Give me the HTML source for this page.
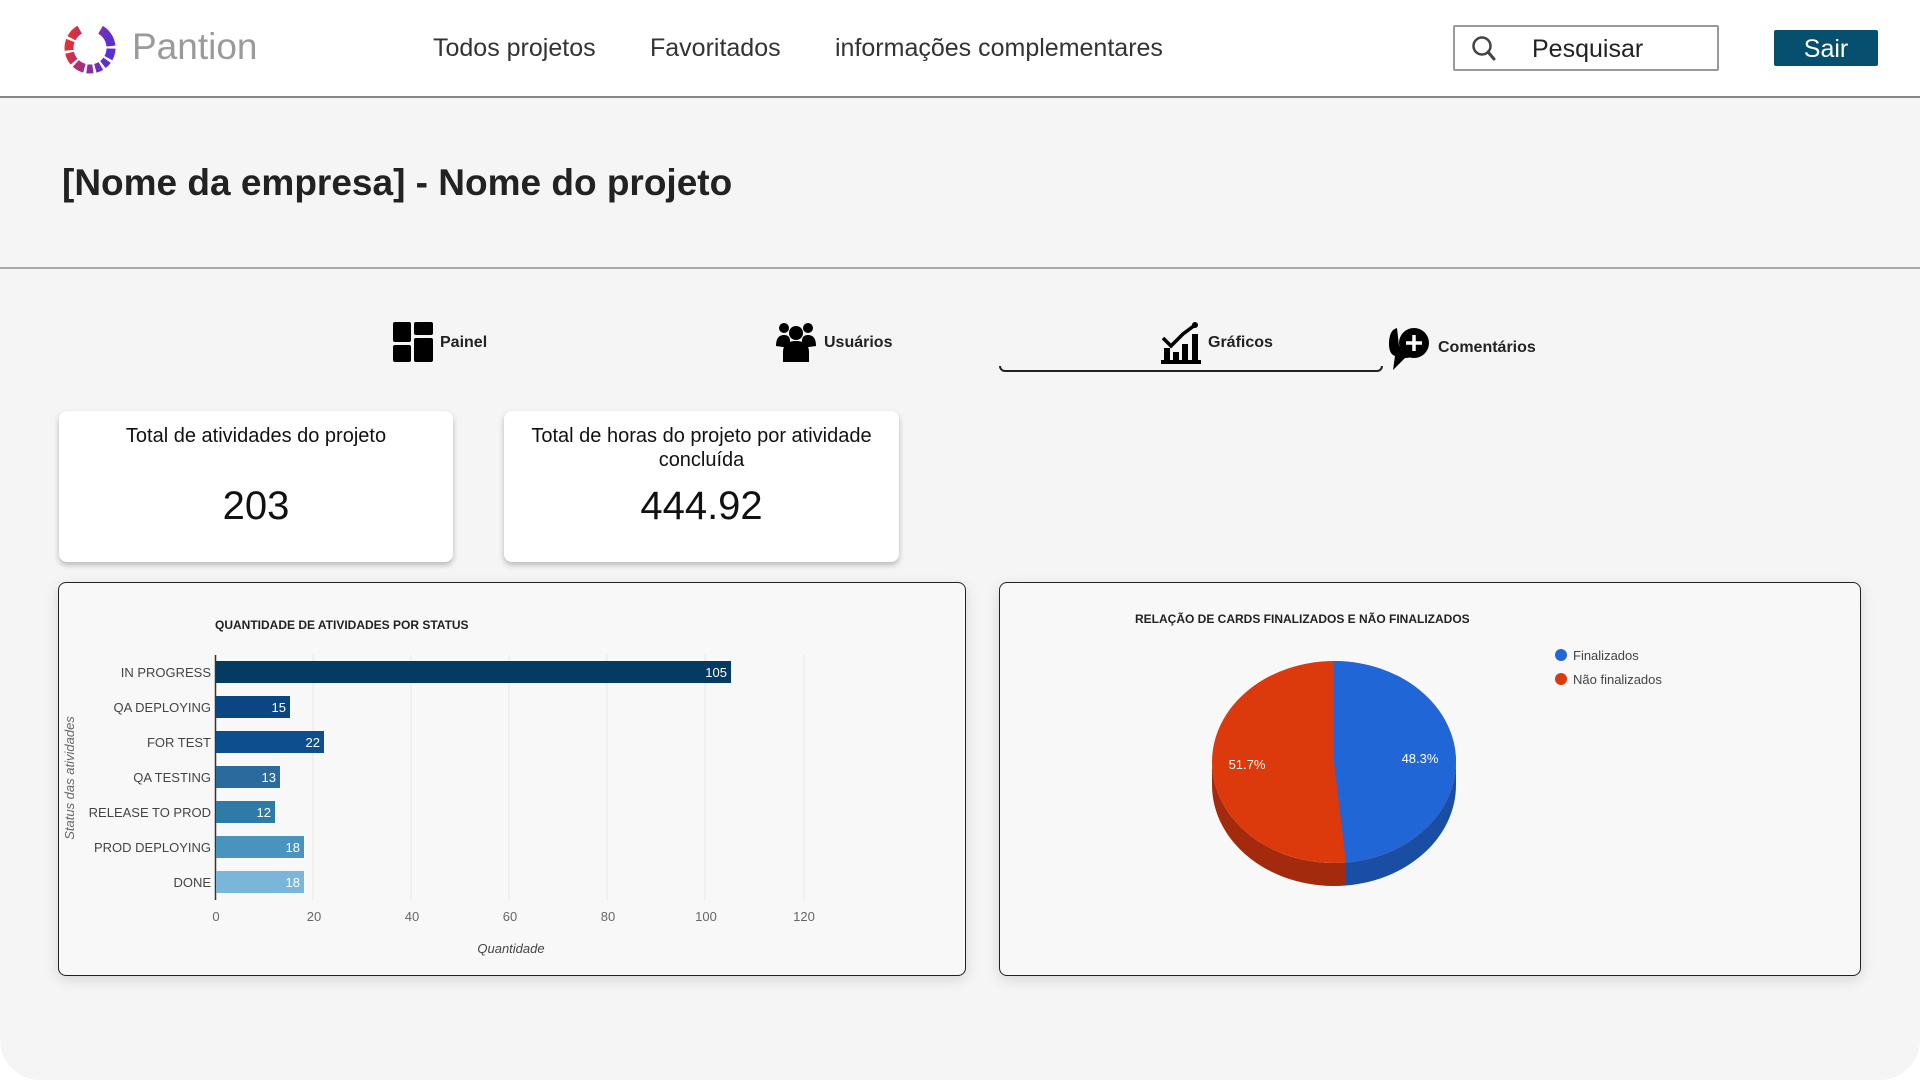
<!DOCTYPE html>
<html><head><meta charset="utf-8"><style>
*{margin:0;padding:0;box-sizing:border-box}
body{width:1920px;height:1080px;background:#fff;font-family:"Liberation Sans",sans-serif;position:relative;overflow:hidden}
.main{position:absolute;left:0;top:96px;width:1920px;height:984px;background:#f5f5f5;border-radius:0 0 40px 40px;border-top:2px solid #888}
.a{position:absolute;white-space:nowrap}
.nav{font-size:25px;color:#333;top:34px}
.card{position:absolute;background:#fff;border-radius:8px;box-shadow:0 3px 6px rgba(0,0,0,.25);text-align:center;color:#111}
.ch{position:absolute;background:#f8f8f8;border:1.5px solid #222;border-radius:8px;box-shadow:0 4px 14px rgba(0,0,0,.12)}
.tab{font-size:16px;font-weight:bold;color:#222}
</style></head><body>
<svg class="a" style="left:62px;top:20px" width="56" height="56" viewBox="0 0 56 56">
<defs><linearGradient id="g" x1="0" y1="0" x2="0.3" y2="1"><stop offset="0" stop-color="#f0302a"/><stop offset="1" stop-color="#5a2fd8"/></linearGradient></defs>
<circle cx="28" cy="28" r="21" fill="none" stroke="url(#g)" stroke-width="9" stroke-dasharray="20 2.5 10 2.5 6 2.5 6 2.5 6 2.5 10 2.5 10 2.5 10 2.5 12 40" transform="rotate(-60 28 28)"/>
</svg>
<div class="a" style="left:132px;top:26px;font-size:37px;color:#9a9a9a">Pantion</div>
<div class="a nav" style="left:433px">Todos projetos</div>
<div class="a nav" style="left:650px">Favoritados</div>
<div class="a nav" style="left:835px">informações complementares</div>
<div class="a" style="left:1453px;top:25px;width:266px;height:46px;border:2px solid #999;border-radius:2px;background:#fff"></div>
<svg class="a" style="left:1470px;top:34px" width="28" height="28" viewBox="0 0 28 28"><circle cx="12" cy="12" r="8.5" fill="none" stroke="#444" stroke-width="2.5"/><path d="M18 18 L24 25" stroke="#444" stroke-width="3" stroke-linecap="round"/></svg>
<div class="a" style="left:1532px;top:35px;font-size:25px;color:#222">Pesquisar</div>
<div class="a" style="left:1774px;top:30px;width:104px;height:36px;background:#064f6e;border-radius:2px;color:#fff;font-size:25px;text-align:center;line-height:38px">Sair</div>
<div class="main"></div>
<div class="a" style="left:62px;top:162px;font-size:37px;font-weight:bold;color:#222">[Nome da empresa] - Nome do projeto</div>
<div class="a" style="left:0;top:267px;width:1920px;height:2px;background:#aaa"></div>

<svg class="a" style="left:393px;top:322px" width="40" height="40" viewBox="0 0 40 40"><rect x="0" y="0" width="18" height="20" rx="2"/><rect x="0" y="23" width="18" height="17" rx="2"/><rect x="21" y="0" width="19" height="13" rx="2"/><rect x="21" y="16" width="19" height="24" rx="2"/></svg>
<div class="a tab" style="left:440px;top:334px">Painel</div>
<svg class="a" style="left:776px;top:322px" width="40" height="40" viewBox="0 0 40 40"><circle cx="8" cy="6" r="5"/><circle cx="32" cy="6" r="5"/><circle cx="20" cy="11" r="7"/><path d="M0 24 Q0 13 8 13 Q14 13 14 19 L14 26 Z"/><path d="M40 24 Q40 13 32 13 Q26 13 26 19 L26 26 Z"/><path d="M7 40 L7 30 Q7 19 20 19 Q33 19 33 30 L33 40 Z"/></svg>
<div class="a tab" style="left:824px;top:334px">Usuários</div>
<svg class="a" style="left:1161px;top:322px" width="40" height="42" viewBox="0 0 40 42"><rect x="0" y="38" width="40" height="4"/><rect x="3" y="26" width="6" height="13"/><rect x="12" y="30" width="6" height="9"/><rect x="21" y="22" width="6" height="17"/><rect x="31" y="12" width="6" height="27"/><path d="M2 16 L10 24 L22 12 L34 3" fill="none" stroke="#000" stroke-width="3.5"/><circle cx="34" cy="3" r="3"/></svg>
<div class="a tab" style="left:1208px;top:334px">Gráficos</div>
<div class="a" style="left:999px;top:366px;width:384px;height:6px;border:2.5px solid #222;border-top:none;border-radius:0 0 6px 6px"></div>
<svg class="a" style="left:1389px;top:326px" width="42" height="44" viewBox="0 0 42 44"><path d="M8 2 Q0 4 0 18 Q0 28 6 30 L4 44 L16 32 Q22 32 22 30 L10 20 Z"/><circle cx="25" cy="17" r="15"/><circle cx="25" cy="17" r="11" fill="#000"/><path d="M25 9 V25 M17 17 H33" stroke="#fff" stroke-width="3.5"/></svg>
<div class="a tab" style="left:1438px;top:339px">Comentários</div>

<div class="card" style="left:59px;top:411px;width:394px;height:151px"><div style="margin-top:14px;font-size:20px">Total de atividades do projeto</div><div style="margin-top:36px;font-size:40px">203</div></div>
<div class="card" style="left:504px;top:411px;width:395px;height:151px"><div style="margin-top:13px;font-size:20px;line-height:24px">Total de horas do projeto por atividade<br>concluída</div><div style="margin-top:12px;font-size:40px">444.92</div></div>

<div class="ch" style="left:58px;top:582px;width:908px;height:394px"></div>
<svg class="a" style="left:58px;top:582px" width="908" height="394" viewBox="58 582 908 394" font-family="Liberation Sans, sans-serif">
<text x="215" y="629" font-size="12" font-weight="bold" fill="#222">QUANTIDADE DE ATIVIDADES POR STATUS</text>
<g stroke="#e8e8e8" stroke-width="1"><path d="M313 655V900M411 655V900M509 655V900M607 655V900M705 655V900M804 655V900"/></g>
<path d="M215.5 655V900" stroke="#333" stroke-width="1.5"/>
<g>
<rect x="216" y="661" width="515" height="22" fill="#053a63"/>
<rect x="216" y="696" width="74" height="22" fill="#0a4682"/>
<rect x="216" y="731" width="108" height="22" fill="#0d4f8e"/>
<rect x="216" y="766" width="64" height="22" fill="#2b6a9c"/>
<rect x="216" y="801" width="59" height="22" fill="#2f7ba8"/>
<rect x="216" y="836" width="88" height="22" fill="#4a93bf"/>
<rect x="216" y="871" width="88" height="22" fill="#7ab6d8"/>
</g>
<g font-size="13" fill="#fff" text-anchor="end"><text x="727" y="677">105</text><text x="286" y="712">15</text><text x="320" y="747">22</text><text x="276" y="782">13</text><text x="271" y="817">12</text><text x="300" y="852">18</text><text x="300" y="887">18</text></g>
<g font-size="13" fill="#444" text-anchor="end"><text x="211" y="677">IN PROGRESS</text><text x="211" y="712">QA DEPLOYING</text><text x="211" y="747">FOR TEST</text><text x="211" y="782">QA TESTING</text><text x="211" y="817">RELEASE TO PROD</text><text x="211" y="852">PROD DEPLOYING</text><text x="211" y="887">DONE</text></g>
<g font-size="13" fill="#666" text-anchor="middle"><text x="216" y="921">0</text><text x="314" y="921">20</text><text x="412" y="921">40</text><text x="510" y="921">60</text><text x="608" y="921">80</text><text x="706" y="921">100</text><text x="804" y="921">120</text></g>
<text x="511" y="953" font-size="13" font-style="italic" fill="#444" text-anchor="middle">Quantidade</text>
<text transform="translate(74 778) rotate(-90)" font-size="13" font-style="italic" fill="#666" text-anchor="middle">Status das atividades</text>
</svg>

<div class="ch" style="left:999px;top:582px;width:862px;height:394px"></div>
<svg class="a" style="left:999px;top:582px" width="862" height="394" viewBox="999 582 862 394" font-family="Liberation Sans, sans-serif">
<text x="1135" y="623" font-size="12" font-weight="bold" fill="#222">RELAÇÃO DE CARDS FINALIZADOS E NÃO FINALIZADOS</text>
<path d="M1212 762 A122 101 0 0 0 1346 862.5 L1346 885.5 A122 101 0 0 1 1212 785 Z" fill="#a32a0c"/>
<path d="M1346 862.5 A122 101 0 0 0 1456 762 L1456 785 A122 101 0 0 1 1346 885.5 Z" fill="#1a4ea5"/>
<ellipse cx="1334" cy="762" rx="122" ry="101" fill="#dc3a0c"/>
<path d="M1334 762 L1334 661 A122 101 0 0 1 1456 762 A122 101 0 0 1 1346 862.5 Z" fill="#2166d6"/>
<text x="1420" y="763" font-size="13" fill="#fff" text-anchor="middle">48.3%</text>
<text x="1247" y="769" font-size="13" fill="#fff" text-anchor="middle">51.7%</text>
<circle cx="1561" cy="655" r="6" fill="#2166d6"/><circle cx="1561" cy="679" r="6" fill="#dc3a0c"/>
<text x="1573" y="660" font-size="13" fill="#444">Finalizados</text>
<text x="1573" y="684" font-size="13" fill="#444">Não finalizados</text>
</svg>
</body></html>
